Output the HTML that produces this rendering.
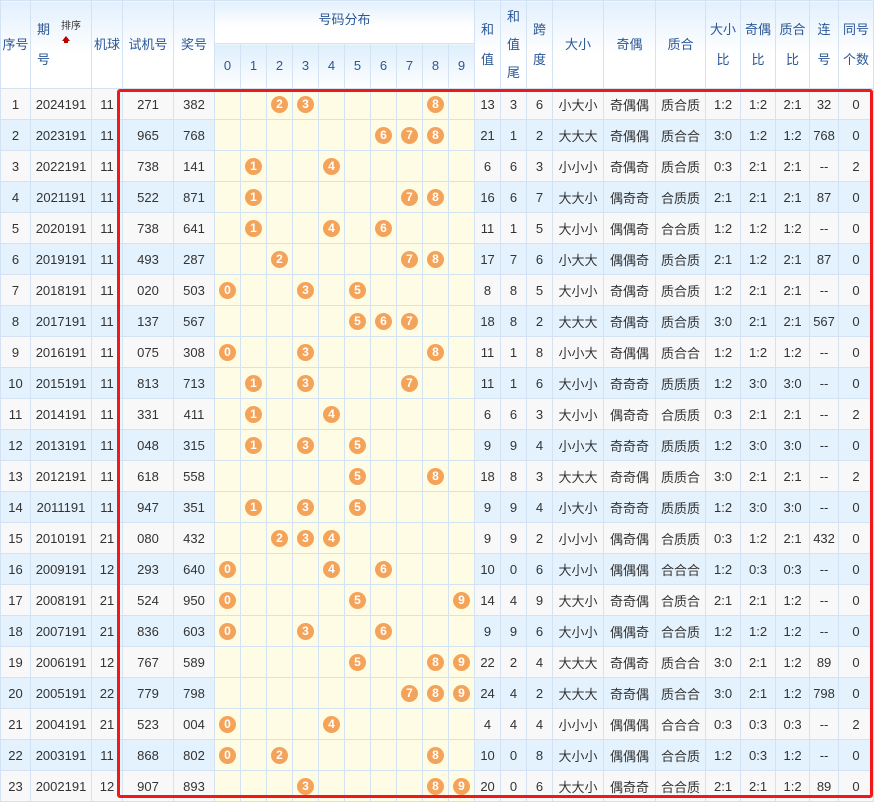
<!DOCTYPE html>
<html><head><meta charset="utf-8"><style>
body{margin:0;background:#fff;width:885px;height:804px;overflow:hidden;position:relative;font-family:"Liberation Sans","Noto Sans CJK SC",sans-serif}
table{border-collapse:collapse;table-layout:fixed;position:absolute;left:0;top:0;width:873px}
td,th{border:1px solid #d3e3f3;text-align:center;padding:0;font-size:13px;color:#333;font-weight:normal}
th{color:#2b5797;background:linear-gradient(#e2f0fd,#fff 60%);line-height:30px}
th.t3{line-height:28px}
tr.h1 th{height:42px}
tr.h2 th{height:44px;background:linear-gradient(#ddeefc,#fff)}
tbody tr{height:31px}
tbody tr:nth-child(odd){background:#f8f8f8}
tbody tr:nth-child(even){background:#e4f2fd}
tbody td.d{background:#fffce6}
b{display:inline-block;width:17px;height:17px;border-radius:50%;background:#f4a35a;color:#fff;font-size:12px;line-height:17px;font-weight:bold;vertical-align:middle}
.box{position:absolute;left:117px;top:89px;width:750px;height:703px;border:3px solid #f01818;border-radius:3px}
.sort{position:absolute;left:61px;top:21px;font-size:10px;color:#333;line-height:12px}
.arr{position:absolute;left:62px;top:36px;width:0;height:0;border-left:4px solid transparent;border-right:4px solid transparent;border-bottom:5px solid #b00}
.arr2{position:absolute;left:64px;top:40px;width:4px;height:3px;background:#b00}
</style></head><body>
<table>
<colgroup><col style="width:30px"><col style="width:61px"><col style="width:31px"><col style="width:51px"><col style="width:41px"><col style="width:26px"><col style="width:26px"><col style="width:26px"><col style="width:26px"><col style="width:26px"><col style="width:26px"><col style="width:26px"><col style="width:26px"><col style="width:26px"><col style="width:26px"><col style="width:26px"><col style="width:26px"><col style="width:26px"><col style="width:51px"><col style="width:52px"><col style="width:50px"><col style="width:35px"><col style="width:35px"><col style="width:34px"><col style="width:29px"><col style="width:35px"></colgroup>
<thead>
<tr class="h1"><th rowspan="2">序号</th><th rowspan="2" style="text-align:left;padding-left:6px">期<br>号</th><th rowspan="2">机球</th><th rowspan="2">试机号</th><th rowspan="2">奖号</th><th colspan="10" style="vertical-align:top;line-height:38px">号码分布</th><th rowspan="2">和<br>值</th><th rowspan="2" class="t3">和<br>值<br>尾</th><th rowspan="2">跨<br>度</th><th rowspan="2">大小</th><th rowspan="2">奇偶</th><th rowspan="2">质合</th><th rowspan="2">大小<br>比</th><th rowspan="2">奇偶<br>比</th><th rowspan="2">质合<br>比</th><th rowspan="2">连<br>号</th><th rowspan="2">同号<br>个数</th></tr>
<tr class="h2"><th>0</th><th>1</th><th>2</th><th>3</th><th>4</th><th>5</th><th>6</th><th>7</th><th>8</th><th>9</th></tr>
</thead>
<tbody>
<tr><td>1</td><td>2024191</td><td>11</td><td>271</td><td>382</td><td class="d"></td><td class="d"></td><td class="d"><b>2</b></td><td class="d"><b>3</b></td><td class="d"></td><td class="d"></td><td class="d"></td><td class="d"></td><td class="d"><b>8</b></td><td class="d"></td><td>13</td><td>3</td><td>6</td><td>小大小</td><td>奇偶偶</td><td>质合质</td><td>1:2</td><td>1:2</td><td>2:1</td><td>32</td><td>0</td></tr>
<tr><td>2</td><td>2023191</td><td>11</td><td>965</td><td>768</td><td class="d"></td><td class="d"></td><td class="d"></td><td class="d"></td><td class="d"></td><td class="d"></td><td class="d"><b>6</b></td><td class="d"><b>7</b></td><td class="d"><b>8</b></td><td class="d"></td><td>21</td><td>1</td><td>2</td><td>大大大</td><td>奇偶偶</td><td>质合合</td><td>3:0</td><td>1:2</td><td>1:2</td><td>768</td><td>0</td></tr>
<tr><td>3</td><td>2022191</td><td>11</td><td>738</td><td>141</td><td class="d"></td><td class="d"><b>1</b></td><td class="d"></td><td class="d"></td><td class="d"><b>4</b></td><td class="d"></td><td class="d"></td><td class="d"></td><td class="d"></td><td class="d"></td><td>6</td><td>6</td><td>3</td><td>小小小</td><td>奇偶奇</td><td>质合质</td><td>0:3</td><td>2:1</td><td>2:1</td><td>--</td><td>2</td></tr>
<tr><td>4</td><td>2021191</td><td>11</td><td>522</td><td>871</td><td class="d"></td><td class="d"><b>1</b></td><td class="d"></td><td class="d"></td><td class="d"></td><td class="d"></td><td class="d"></td><td class="d"><b>7</b></td><td class="d"><b>8</b></td><td class="d"></td><td>16</td><td>6</td><td>7</td><td>大大小</td><td>偶奇奇</td><td>合质质</td><td>2:1</td><td>2:1</td><td>2:1</td><td>87</td><td>0</td></tr>
<tr><td>5</td><td>2020191</td><td>11</td><td>738</td><td>641</td><td class="d"></td><td class="d"><b>1</b></td><td class="d"></td><td class="d"></td><td class="d"><b>4</b></td><td class="d"></td><td class="d"><b>6</b></td><td class="d"></td><td class="d"></td><td class="d"></td><td>11</td><td>1</td><td>5</td><td>大小小</td><td>偶偶奇</td><td>合合质</td><td>1:2</td><td>1:2</td><td>1:2</td><td>--</td><td>0</td></tr>
<tr><td>6</td><td>2019191</td><td>11</td><td>493</td><td>287</td><td class="d"></td><td class="d"></td><td class="d"><b>2</b></td><td class="d"></td><td class="d"></td><td class="d"></td><td class="d"></td><td class="d"><b>7</b></td><td class="d"><b>8</b></td><td class="d"></td><td>17</td><td>7</td><td>6</td><td>小大大</td><td>偶偶奇</td><td>质合质</td><td>2:1</td><td>1:2</td><td>2:1</td><td>87</td><td>0</td></tr>
<tr><td>7</td><td>2018191</td><td>11</td><td>020</td><td>503</td><td class="d"><b>0</b></td><td class="d"></td><td class="d"></td><td class="d"><b>3</b></td><td class="d"></td><td class="d"><b>5</b></td><td class="d"></td><td class="d"></td><td class="d"></td><td class="d"></td><td>8</td><td>8</td><td>5</td><td>大小小</td><td>奇偶奇</td><td>质合质</td><td>1:2</td><td>2:1</td><td>2:1</td><td>--</td><td>0</td></tr>
<tr><td>8</td><td>2017191</td><td>11</td><td>137</td><td>567</td><td class="d"></td><td class="d"></td><td class="d"></td><td class="d"></td><td class="d"></td><td class="d"><b>5</b></td><td class="d"><b>6</b></td><td class="d"><b>7</b></td><td class="d"></td><td class="d"></td><td>18</td><td>8</td><td>2</td><td>大大大</td><td>奇偶奇</td><td>质合质</td><td>3:0</td><td>2:1</td><td>2:1</td><td>567</td><td>0</td></tr>
<tr><td>9</td><td>2016191</td><td>11</td><td>075</td><td>308</td><td class="d"><b>0</b></td><td class="d"></td><td class="d"></td><td class="d"><b>3</b></td><td class="d"></td><td class="d"></td><td class="d"></td><td class="d"></td><td class="d"><b>8</b></td><td class="d"></td><td>11</td><td>1</td><td>8</td><td>小小大</td><td>奇偶偶</td><td>质合合</td><td>1:2</td><td>1:2</td><td>1:2</td><td>--</td><td>0</td></tr>
<tr><td>10</td><td>2015191</td><td>11</td><td>813</td><td>713</td><td class="d"></td><td class="d"><b>1</b></td><td class="d"></td><td class="d"><b>3</b></td><td class="d"></td><td class="d"></td><td class="d"></td><td class="d"><b>7</b></td><td class="d"></td><td class="d"></td><td>11</td><td>1</td><td>6</td><td>大小小</td><td>奇奇奇</td><td>质质质</td><td>1:2</td><td>3:0</td><td>3:0</td><td>--</td><td>0</td></tr>
<tr><td>11</td><td>2014191</td><td>11</td><td>331</td><td>411</td><td class="d"></td><td class="d"><b>1</b></td><td class="d"></td><td class="d"></td><td class="d"><b>4</b></td><td class="d"></td><td class="d"></td><td class="d"></td><td class="d"></td><td class="d"></td><td>6</td><td>6</td><td>3</td><td>大小小</td><td>偶奇奇</td><td>合质质</td><td>0:3</td><td>2:1</td><td>2:1</td><td>--</td><td>2</td></tr>
<tr><td>12</td><td>2013191</td><td>11</td><td>048</td><td>315</td><td class="d"></td><td class="d"><b>1</b></td><td class="d"></td><td class="d"><b>3</b></td><td class="d"></td><td class="d"><b>5</b></td><td class="d"></td><td class="d"></td><td class="d"></td><td class="d"></td><td>9</td><td>9</td><td>4</td><td>小小大</td><td>奇奇奇</td><td>质质质</td><td>1:2</td><td>3:0</td><td>3:0</td><td>--</td><td>0</td></tr>
<tr><td>13</td><td>2012191</td><td>11</td><td>618</td><td>558</td><td class="d"></td><td class="d"></td><td class="d"></td><td class="d"></td><td class="d"></td><td class="d"><b>5</b></td><td class="d"></td><td class="d"></td><td class="d"><b>8</b></td><td class="d"></td><td>18</td><td>8</td><td>3</td><td>大大大</td><td>奇奇偶</td><td>质质合</td><td>3:0</td><td>2:1</td><td>2:1</td><td>--</td><td>2</td></tr>
<tr><td>14</td><td>2011191</td><td>11</td><td>947</td><td>351</td><td class="d"></td><td class="d"><b>1</b></td><td class="d"></td><td class="d"><b>3</b></td><td class="d"></td><td class="d"><b>5</b></td><td class="d"></td><td class="d"></td><td class="d"></td><td class="d"></td><td>9</td><td>9</td><td>4</td><td>小大小</td><td>奇奇奇</td><td>质质质</td><td>1:2</td><td>3:0</td><td>3:0</td><td>--</td><td>0</td></tr>
<tr><td>15</td><td>2010191</td><td>21</td><td>080</td><td>432</td><td class="d"></td><td class="d"></td><td class="d"><b>2</b></td><td class="d"><b>3</b></td><td class="d"><b>4</b></td><td class="d"></td><td class="d"></td><td class="d"></td><td class="d"></td><td class="d"></td><td>9</td><td>9</td><td>2</td><td>小小小</td><td>偶奇偶</td><td>合质质</td><td>0:3</td><td>1:2</td><td>2:1</td><td>432</td><td>0</td></tr>
<tr><td>16</td><td>2009191</td><td>12</td><td>293</td><td>640</td><td class="d"><b>0</b></td><td class="d"></td><td class="d"></td><td class="d"></td><td class="d"><b>4</b></td><td class="d"></td><td class="d"><b>6</b></td><td class="d"></td><td class="d"></td><td class="d"></td><td>10</td><td>0</td><td>6</td><td>大小小</td><td>偶偶偶</td><td>合合合</td><td>1:2</td><td>0:3</td><td>0:3</td><td>--</td><td>0</td></tr>
<tr><td>17</td><td>2008191</td><td>21</td><td>524</td><td>950</td><td class="d"><b>0</b></td><td class="d"></td><td class="d"></td><td class="d"></td><td class="d"></td><td class="d"><b>5</b></td><td class="d"></td><td class="d"></td><td class="d"></td><td class="d"><b>9</b></td><td>14</td><td>4</td><td>9</td><td>大大小</td><td>奇奇偶</td><td>合质合</td><td>2:1</td><td>2:1</td><td>1:2</td><td>--</td><td>0</td></tr>
<tr><td>18</td><td>2007191</td><td>21</td><td>836</td><td>603</td><td class="d"><b>0</b></td><td class="d"></td><td class="d"></td><td class="d"><b>3</b></td><td class="d"></td><td class="d"></td><td class="d"><b>6</b></td><td class="d"></td><td class="d"></td><td class="d"></td><td>9</td><td>9</td><td>6</td><td>大小小</td><td>偶偶奇</td><td>合合质</td><td>1:2</td><td>1:2</td><td>1:2</td><td>--</td><td>0</td></tr>
<tr><td>19</td><td>2006191</td><td>12</td><td>767</td><td>589</td><td class="d"></td><td class="d"></td><td class="d"></td><td class="d"></td><td class="d"></td><td class="d"><b>5</b></td><td class="d"></td><td class="d"></td><td class="d"><b>8</b></td><td class="d"><b>9</b></td><td>22</td><td>2</td><td>4</td><td>大大大</td><td>奇偶奇</td><td>质合合</td><td>3:0</td><td>2:1</td><td>1:2</td><td>89</td><td>0</td></tr>
<tr><td>20</td><td>2005191</td><td>22</td><td>779</td><td>798</td><td class="d"></td><td class="d"></td><td class="d"></td><td class="d"></td><td class="d"></td><td class="d"></td><td class="d"></td><td class="d"><b>7</b></td><td class="d"><b>8</b></td><td class="d"><b>9</b></td><td>24</td><td>4</td><td>2</td><td>大大大</td><td>奇奇偶</td><td>质合合</td><td>3:0</td><td>2:1</td><td>1:2</td><td>798</td><td>0</td></tr>
<tr><td>21</td><td>2004191</td><td>21</td><td>523</td><td>004</td><td class="d"><b>0</b></td><td class="d"></td><td class="d"></td><td class="d"></td><td class="d"><b>4</b></td><td class="d"></td><td class="d"></td><td class="d"></td><td class="d"></td><td class="d"></td><td>4</td><td>4</td><td>4</td><td>小小小</td><td>偶偶偶</td><td>合合合</td><td>0:3</td><td>0:3</td><td>0:3</td><td>--</td><td>2</td></tr>
<tr><td>22</td><td>2003191</td><td>11</td><td>868</td><td>802</td><td class="d"><b>0</b></td><td class="d"></td><td class="d"><b>2</b></td><td class="d"></td><td class="d"></td><td class="d"></td><td class="d"></td><td class="d"></td><td class="d"><b>8</b></td><td class="d"></td><td>10</td><td>0</td><td>8</td><td>大小小</td><td>偶偶偶</td><td>合合质</td><td>1:2</td><td>0:3</td><td>1:2</td><td>--</td><td>0</td></tr>
<tr><td>23</td><td>2002191</td><td>12</td><td>907</td><td>893</td><td class="d"></td><td class="d"></td><td class="d"></td><td class="d"><b>3</b></td><td class="d"></td><td class="d"></td><td class="d"></td><td class="d"></td><td class="d"><b>8</b></td><td class="d"><b>9</b></td><td>20</td><td>0</td><td>6</td><td>大大小</td><td>偶奇奇</td><td>合合质</td><td>2:1</td><td>2:1</td><td>1:2</td><td>89</td><td>0</td></tr>
</tbody>
</table>
<div class="sort">排序</div><div class="arr"></div><div class="arr2"></div>
<div class="box"></div>
</body></html>
